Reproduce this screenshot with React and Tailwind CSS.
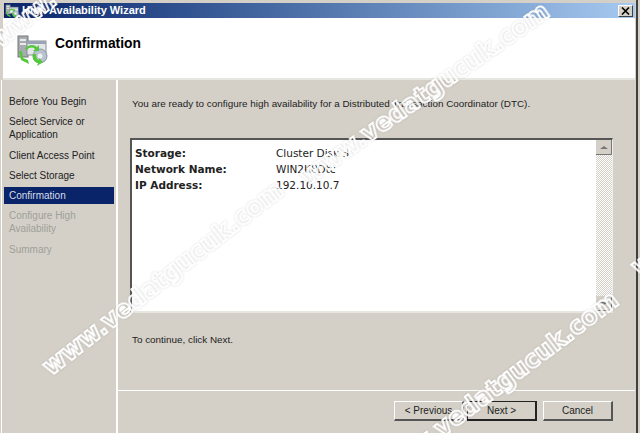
import React from 'react';

const steps = [
  { label: 'Before You Begin', cls: 'h-[18px] text-[#222]' },
  { label: 'Select Service or Application', cls: 'mt-[3px] h-[30px] text-[#222]' },
  { label: 'Client Access Point', cls: 'mt-[3px] h-[18px] text-[#222]' },
  { label: 'Select Storage', cls: 'mt-[2px] h-[18px] text-[#222]' },
  { label: 'Confirmation', cls: 'mt-[3px] h-[17px] bg-[#0a246a] text-[#d8dce8]' },
  { label: 'Configure High Availability', cls: 'mt-[3px] h-[30px] text-[#a09f98]' },
  { label: 'Summary', cls: 'mt-[3px] h-[18px] text-[#a09f98]' },
];

function WizardIcon({ size = 32 }) {
  return (
    <svg width={size} height={size} viewBox="0 0 32 32" className="shrink-0">
      <rect x="2" y="2" width="10" height="21" fill="#a7acb0" stroke="#777" />
      <rect x="4" y="5" width="6" height="2" fill="#e8eaec" />
      <rect x="4" y="9" width="6" height="2" fill="#e8eaec" />
      <rect x="11" y="7" width="19" height="14" fill="#e3e6ea" stroke="#8a8f94" />
      <rect x="11" y="7" width="19" height="3" fill="#9aa4b4" />
      <circle cx="24" cy="22" r="7" fill="#b9c3cf" stroke="#8a97a6" />
      <circle cx="24" cy="22" r="2.500" fill="#eef1f4" />
      <path d="M3 17l2 9 8 4-1-4-5-2-1-7z" fill="#52c83a" />
      <path d="M9 15c3-5 9-5 12-2l2-2v6h-6l2-2c-2-2-6-2-8 1z" fill="#52c83a" />
      <path d="M17 20c-1 5 1 8 5 9l-1 3 6-4-4-4v2c-2 0-3-3-3-6z" fill="#52c83a" />
    </svg>
  );
}

function Watermark({ left, top, angle }) {
  // position and angle differ per instance
  return (
    <div
      className="absolute origin-left whitespace-nowrap font-['DejaVu_Sans',sans-serif] text-[24px] font-bold leading-none text-transparent [-webkit-text-stroke:2px_#ffffff] drop-shadow-[0_0_1px_rgba(0,0,0,0.15)]"
      style={{ left, top, transform: `rotate(${angle}deg)` }}
    >
      www.vedatgucuk.com
    </div>
  );
}

function WizardButton({ children, primary, cls = '' }) {
  return (
    <div
      className={`flex h-[20px] w-[70px] items-center justify-center border-t border-r-2 border-b-2 border-l text-[10px] text-[#222] ${cls} ${
        primary
          ? 'border-[#222]'
          : 'border-t-white border-r-[#555] border-b-[#555] border-l-white'
      }`}
    >
      {children}
    </div>
  );
}

export default function App() {
  return (
    <div className="relative h-[433px] w-[640px] overflow-hidden bg-[#d4d0c8] font-['Liberation_Sans',sans-serif]">
      <div className="flex h-[433px] w-[638px] flex-col border-r-2 border-r-[#404040] pl-[1px] pr-px pt-[3px]">
        <div className="ml-[3px] flex h-[15px] shrink-0 items-center justify-between bg-gradient-to-r from-[#0a246a] to-[#a6caf0] pl-[1px] pr-[2px]">
          <div className="flex items-center gap-[3px]">
            <WizardIcon size={14} />
            <span className="text-[11px] font-bold text-white">High Availability Wizard</span>
          </div>
          <div className="flex h-[12px] w-[15px] items-center justify-center border border-t-white border-r-[#404040] border-b-[#404040] border-l-white bg-[#d4d0c8]">
            <svg width="9" height="8" viewBox="0 0 9 8">
              <path d="M1 0.500l7 7M8 0.500l-7 7" fill="none" stroke="#000" strokeWidth="1.600" />
            </svg>
          </div>
        </div>
        <div className="ml-[2px] flex h-[60px] shrink-0 items-start gap-[7px] bg-white pl-[13px] pt-[16px]">
          <WizardIcon />
          <h1 className="mt-[1px] text-[13.8px] font-bold leading-[18px] text-black">Confirmation</h1>
        </div>
        <div className="ml-[2px] h-[2px] shrink-0 bg-[#e8e6e0]" />
        <div className="flex min-h-0 flex-1">
          <div className="w-[115px] shrink-0 border-l border-l-white pl-[2px] pr-[2px] pt-[12px] text-[10px] leading-[13px]">
            {steps.map((step) => (
              <div key={step.label} className={`flex items-center pl-[5px] pr-[8px] ${step.cls}`}>
                <span>{step.label}</span>
              </div>
            ))}
          </div>
          <div className="flex min-w-0 flex-1 flex-col border-l-2 border-l-white pt-[16px]">
            <div className="h-[294px] pl-[14px] text-[9.9px] text-[#222]">
              <p className="leading-[16px]">
                You are ready to configure high availability for a Distributed Transaction Coordinator (DTC).
              </p>
              <div className="-ml-[2px] mt-[26px] flex h-[175px] w-[483px] border-t-2 border-r border-b-2 border-l-2 border-t-[#555] border-r-[#eeeeee] border-b-[#e8e6e0] border-l-[#555] bg-white">
                <div className="grid flex-1 grid-cols-[141px_1fr] content-start pl-[3px] pt-[5px] font-['DejaVu_Sans',sans-serif] text-[10.500px] leading-[16px] text-[#222]">
                  <span className="font-bold">Storage:</span>
                  <span>Cluster Disk 3</span>
                  <span className="font-bold">Network Name:</span>
                  <span>WIN2K8Dtc</span>
                  <span className="font-bold">IP Address:</span>
                  <span>192.10.10.7</span>
                </div>
                <div className="flex w-[16px] shrink-0 flex-col bg-[repeating-conic-gradient(#d4d0c8_0_25%,#ffffff_0_50%)] bg-[length:2px_2px]">
                  <div className="flex h-[15px] items-center justify-center border-r border-b border-r-[#777] border-b-[#777] bg-[#d4d0c8]">
                    <div className="h-0 w-0 border-x-[4px] border-b-[3px] border-x-transparent border-b-[#777]" />
                  </div>
                  <div className="flex-1" />
                  <div className="flex h-[15px] items-center justify-center border-r border-b border-r-[#777] border-b-[#777] bg-[#d4d0c8]">
                    <div className="h-0 w-0 border-x-[4px] border-t-[3px] border-x-transparent border-t-[#777]" />
                  </div>
                </div>
              </div>
              <p className="mt-[19px] leading-[16px]">To continue, click Next.</p>
            </div>
            <div className="h-px bg-white" />
            <div className="flex pl-[276px] pt-[10px]">
              <WizardButton>&lt; Previous</WizardButton>
              <WizardButton primary cls="ml-[3px]">Next &gt;</WizardButton>
              <WizardButton cls="ml-[6px]">Cancel</WizardButton>
            </div>
          </div>
        </div>
      </div>
      <Watermark left={46} top={358} angle={-38} />
      <Watermark left={303} top={167} angle={-35} />
      <Watermark left={378} top={464} angle={-37} />
      <Watermark left={-5} top={30} angle={-38} />
      <Watermark left={634} top={258} angle={-35} />
    </div>
  );
}
